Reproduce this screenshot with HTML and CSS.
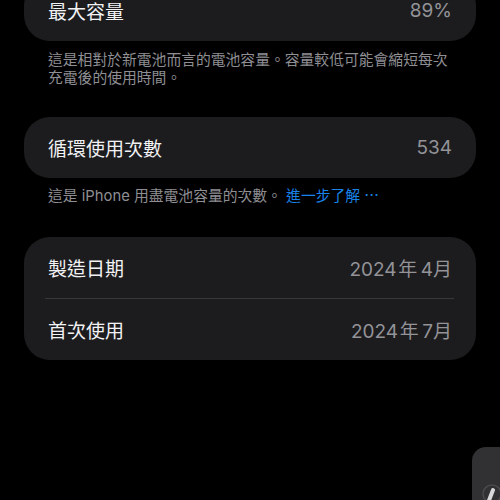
FILE: index.html
```html
<!DOCTYPE html>
<html lang="zh-Hant">
<head>
<meta charset="utf-8">
<link rel="stylesheet" href="styles.css">
</head>
<body>
<main class="page">
  <section class="card card-first">
    <div class="row"><span class="label">最大容量</span><span class="value">89%</span></div>
  </section>
  <p class="caption caption-first">這是相對於新電池而言的電池容量。容量較低可能會縮短每次充電後的使用時間。</p>

  <section class="card">
    <div class="row"><span class="label">循環使用次數</span><span class="value">534</span></div>
  </section>
  <p class="caption caption-second">這是 iPhone 用盡電池容量的次數。 <span class="link">進一步了解 ⋯</span></p>

  <section class="card">
    <div class="row"><span class="label">製造日期</span><span class="value">2024&#8202;年&#8201;4月</span></div>
    <div class="divider"></div>
    <div class="row"><span class="label">首次使用</span><span class="value">2024&#8202;年&#8201;7月</span></div>
  </section>
</main>
<div class="knob">
  <svg width="28" height="53" viewBox="0 0 28 53">
    <circle cx="20" cy="47" r="9" fill="none" stroke="#4a4a4d" stroke-width="1.5"/>
    <line x1="16" y1="56" x2="21" y2="43" stroke="#d8d8d8" stroke-width="4" stroke-linecap="round"/>
  </svg>
</div>
</body>
</html>
```

FILE: styles.css
```css
html, body {
  margin: 0;
  padding: 0;
  background: #000;
  overflow: hidden;
  height: 500px;
}
body {
  font-family: "Inter", "Noto Sans CJK TC", sans-serif;
  color: #fff;
  position: relative;
}
.page {
  display: flex;
  flex-direction: column;
  padding: 0 24px;
}
.card {
  background: #1c1c1e;
  border-radius: 26px;
  display: flex;
  flex-direction: column;
}
.card-first {
  margin-top: -20px;
}
.row {
  height: 61px;
  display: flex;
  align-items: center;
  justify-content: space-between;
  padding: 0 24px;
}
.label {
  font-size: 19px;
  color: #f2f2f4;
}
.value {
  font-size: 19px;
  color: #939398;
}
.divider {
  height: 1px;
  background: #38383a;
  margin: 0 22px 0 21px;
}
.caption {
  margin: 0;
  padding: 0 22px 0 24px;
  font-size: 14.8px;
  line-height: 17.5px;
  color: #8e8e93;
}
.caption-first {
  padding-top: 11px;
  padding-bottom: 30px;
}
.caption-second {
  padding-top: 10px;
  padding-bottom: 31px;
}
.link {
  color: #1a82e8;
}
.knob {
  position: absolute;
  left: 472px;
  top: 447px;
  width: 40px;
  height: 60px;
  background: #313133;
  border-radius: 14px 0 0 0;
  overflow: hidden;
}
.knob svg {
  display: block;
}
```
